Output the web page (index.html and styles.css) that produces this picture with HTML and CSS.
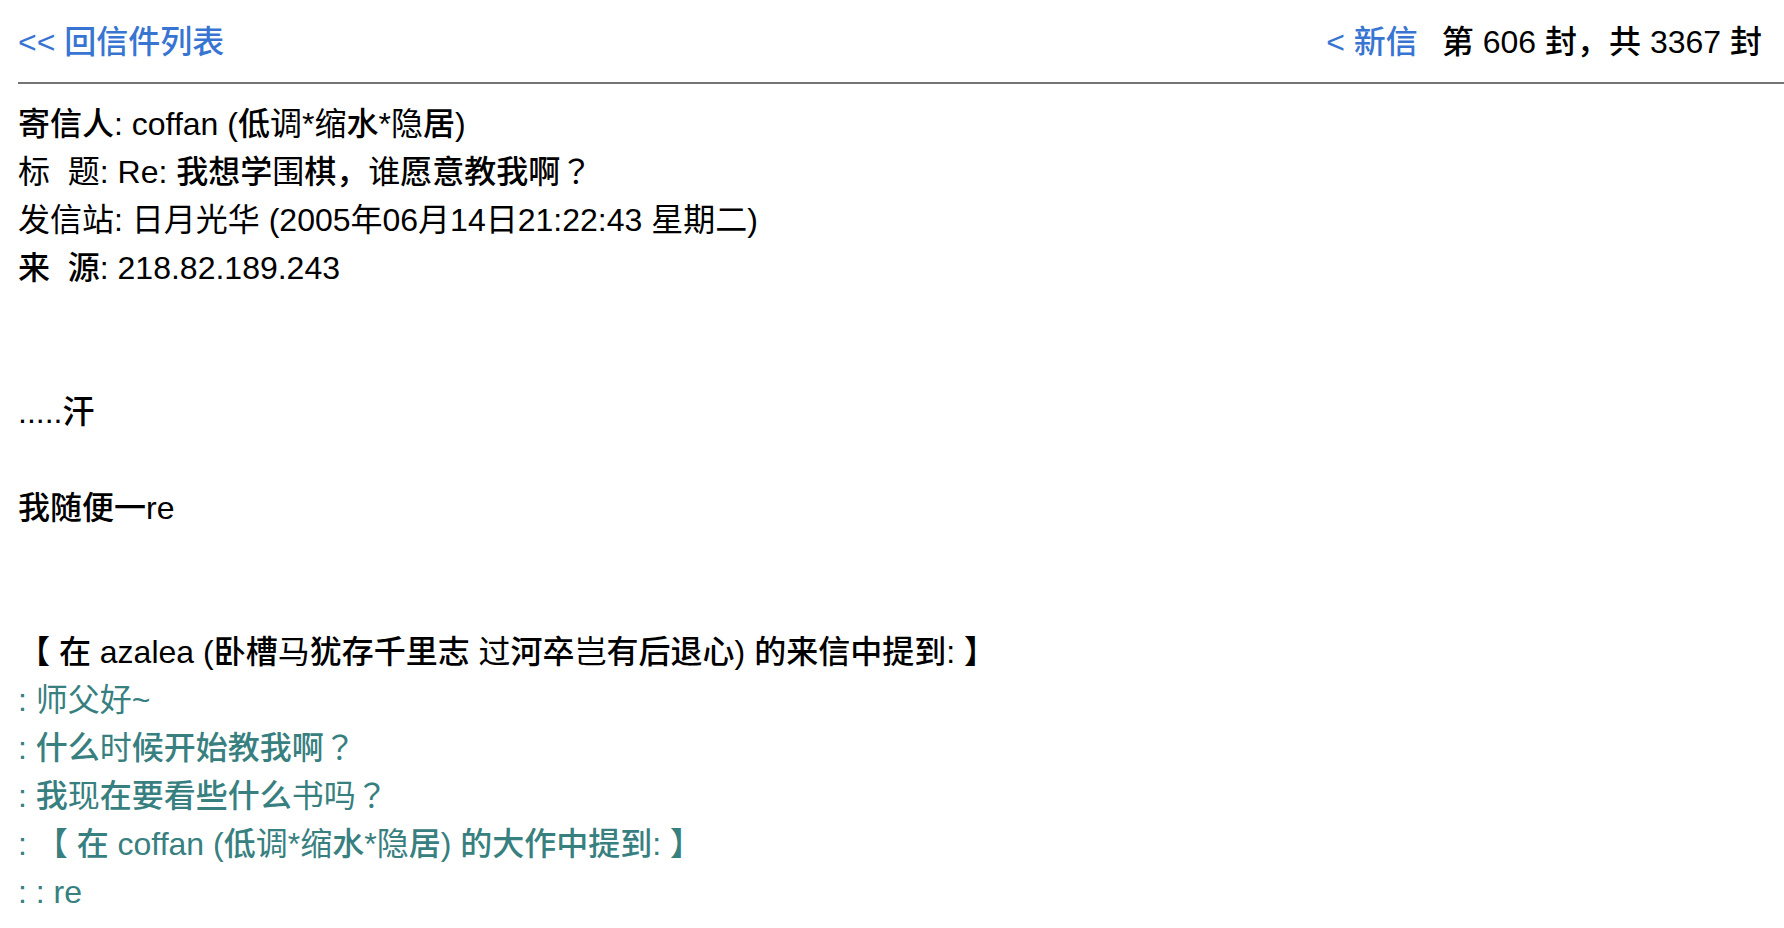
FILE: index.html
```html
<!DOCTYPE html>
<html lang="zh-CN">
<head>
<meta charset="utf-8">
<title>信件阅读</title>
<link rel="stylesheet" href="styles.css">
</head>
<body>
<nav class="toolbar">
<a class="link" href="#list">&lt;&lt; 回信件列表</a>
<div class="pager"><a class="link" href="#newer">&lt; 新信</a><span>第 606 封，共 3367 封</span></div>
</nav>
<main class="mail">
<header class="block">
<p class="line">寄信人: coffan (低<span class="light">调</span>*<span class="light">缩</span>水*<span class="light">隐</span>居)</p>
<p class="line"><span class="light">标  题</span>: Re: 我想学<span class="light">围</span>棋，<span class="light">谁</span>愿意教我啊<span class="mark" lang="ja">？</span></p>
<p class="line light">发信站: 日月光华 (2005年06月14日21:22:43 星期二)</p>
<p class="line">来  源: 218.82.189.243</p>
</header>
<section class="block">
<p class="line"></p>
<p class="line"></p>
<p class="line">.....汗</p>
<p class="line"></p>
<p class="line">我随便一re</p>
<p class="line"></p>
<p class="line"></p>
<p class="line">【 在 azalea (卧槽<span class="light">马</span>犹存千里志 <span class="light">过</span>河卒<span class="light">岂</span>有后退心) 的来信中提到: 】</p>
</section>
<blockquote class="block quote">
<p class="line">: <span class="light">师父好</span>~</p>
<p class="line">: 什么<span class="light">时</span>候开始教我啊<span class="mark" lang="ja">？</span></p>
<p class="line">: 我<span class="light">现</span>在要看些什么<span class="light">书吗</span><span class="mark" lang="ja">？</span></p>
<p class="line">: 【 在 coffan (低<span class="light">调</span>*<span class="light">缩</span>水*<span class="light">隐</span>居) 的大作中提到: 】</p>
<p class="line">: : re</p>
</blockquote>
</main>
</body>
</html>
```

FILE: styles.css
```css
body {
  margin: 0;
  padding: 0 0 0 18px;
  background: #fff;
  color: #000;
  font-family: "Liberation Sans", "Noto Sans CJK SC", sans-serif;
  font-size: 32px;
  font-weight: 500;
  line-height: 48px;
}

.toolbar {
  display: flex;
  justify-content: space-between;
  padding: 18px 22px 16px 0;
  border-bottom: 2px solid #757575;
}

.pager {
  display: flex;
  gap: 24px;
}

.link {
  color: #3875d2;
  text-decoration: none;
}

.mail {
  padding-top: 16px;
}

.block {
  margin: 0;
}

.line {
  margin: 0;
  min-height: 48px;
  white-space: pre-wrap;
}

.light {
  font-weight: 400;
}

.mark {
  font-family: "Noto Sans CJK JP", sans-serif;
  font-weight: 400;
  line-height: 1;
}

.quote {
  color: #38807f;
}
```
